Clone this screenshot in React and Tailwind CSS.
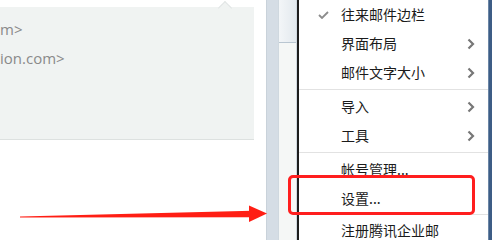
const cjk = "font-['Noto_Sans_CJK_SC','Noto_Sans',sans-serif]"

const items = [
  { label: "往来邮件边栏", checked: true },
  { label: "界面布局", sub: true },
  { label: "邮件文字大小", sub: true },
  "sep",
  { label: "导入", sub: true },
  { label: "工具", sub: true },
  "sep",
  { label: "帐号管理..." },
  { label: "设置..." },
  "sep-tight",
  { label: "注册腾讯企业邮" },
]

function Check() {
  return (
    <svg width="11" height="8" viewBox="0 0 11 8" fill="none">
      <path d="M1 4l3 3 6-6" stroke="#8c8c8c" strokeWidth="1.8" />
    </svg>
  )
}

function Chevron() {
  return (
    <svg width="8" height="12" viewBox="0 0 8 12" fill="none">
      <path d="M1.5 1.5l4.5 4.5-4.5 4.5" stroke="#777777" strokeWidth="2.2" />
    </svg>
  )
}

export default function App() {
  return (
    <div className="relative flex h-[240px] w-[492px] overflow-hidden bg-white">
      {/* mail preview area */}
      <div className="w-[266px] shrink-0 pt-[7px]">
        <div className="relative h-[133px] w-[254px] border-b border-[#dde1e0] bg-[#f0f3f2]">
          <div className="absolute left-[220px] top-[-4px] h-[10px] w-[10px] rotate-45 border-l border-t border-[#e2e6e5] bg-[#f0f3f2]" />
          <div className="relative pt-[8px] font-['Open_Sans',sans-serif] text-[15px] leading-[29px] text-[#8a8a8a]">
            <div>m&gt;</div>
            <div>ion.com&gt;</div>
          </div>
        </div>
      </div>

      {/* scrollbar */}
      <div className="flex w-[31px] shrink-0">
        <div className="w-[12px] border-l border-[#c9d2da] bg-[#d5dde5]" />
        <div className="w-[19px] border-x border-[#cfd8df] bg-[#f5f7f6]">
          <div className="h-[43px] border-b border-[#b9c6d1] bg-gradient-to-r from-[#f3f6f8] to-[#e3e9ee]" />
        </div>
      </div>
      <div className="w-[2px] shrink-0 bg-[#1d1d1d]" />

      {/* context menu */}
      <div className={`flex flex-1 flex-col text-[14px] text-[#1b1b1b] ${cjk}`}>
        {items.map((it, i) =>
          it === "sep" ? (
            <div key={i} className="h-[5px] shrink-0 pt-[2px]">
              <div className="h-px bg-[#e2e2e2]" />
            </div>
          ) : it === "sep-tight" ? (
            <div key={i} className="h-[3px] shrink-0 pt-[1px]">
              <div className="h-px bg-[#e2e2e2]" />
            </div>
          ) : (
            <div key={i} className="flex h-[29px] shrink-0 items-center pl-[19px] pr-[13px]">
              <div className="flex w-[23px] items-center">{it.checked && <Check />}</div>
              <div className="flex-1 whitespace-nowrap">{it.label}</div>
              {it.sub && <Chevron />}
            </div>
          )
        )}
      </div>
      <div className="w-[4px] shrink-0 border-l border-[#6b86a6] bg-[#3d5d86]" />

      {/* annotations */}
      <div className="absolute left-[288px] top-[175px] h-[40px] w-[187px] rounded-[5px] border-[3px] border-[#ff1e1e]" />
      <svg className="absolute left-0 top-0" width="492" height="240" viewBox="0 0 492 240">
        <polygon points="20,216.4 252,210.8 252,217.2 20,217.6" fill="#ff1e14" />
        <polygon points="249,205.5 267,213.5 249,222" fill="#ff1e14" />
      </svg>
    </div>
  )
}
